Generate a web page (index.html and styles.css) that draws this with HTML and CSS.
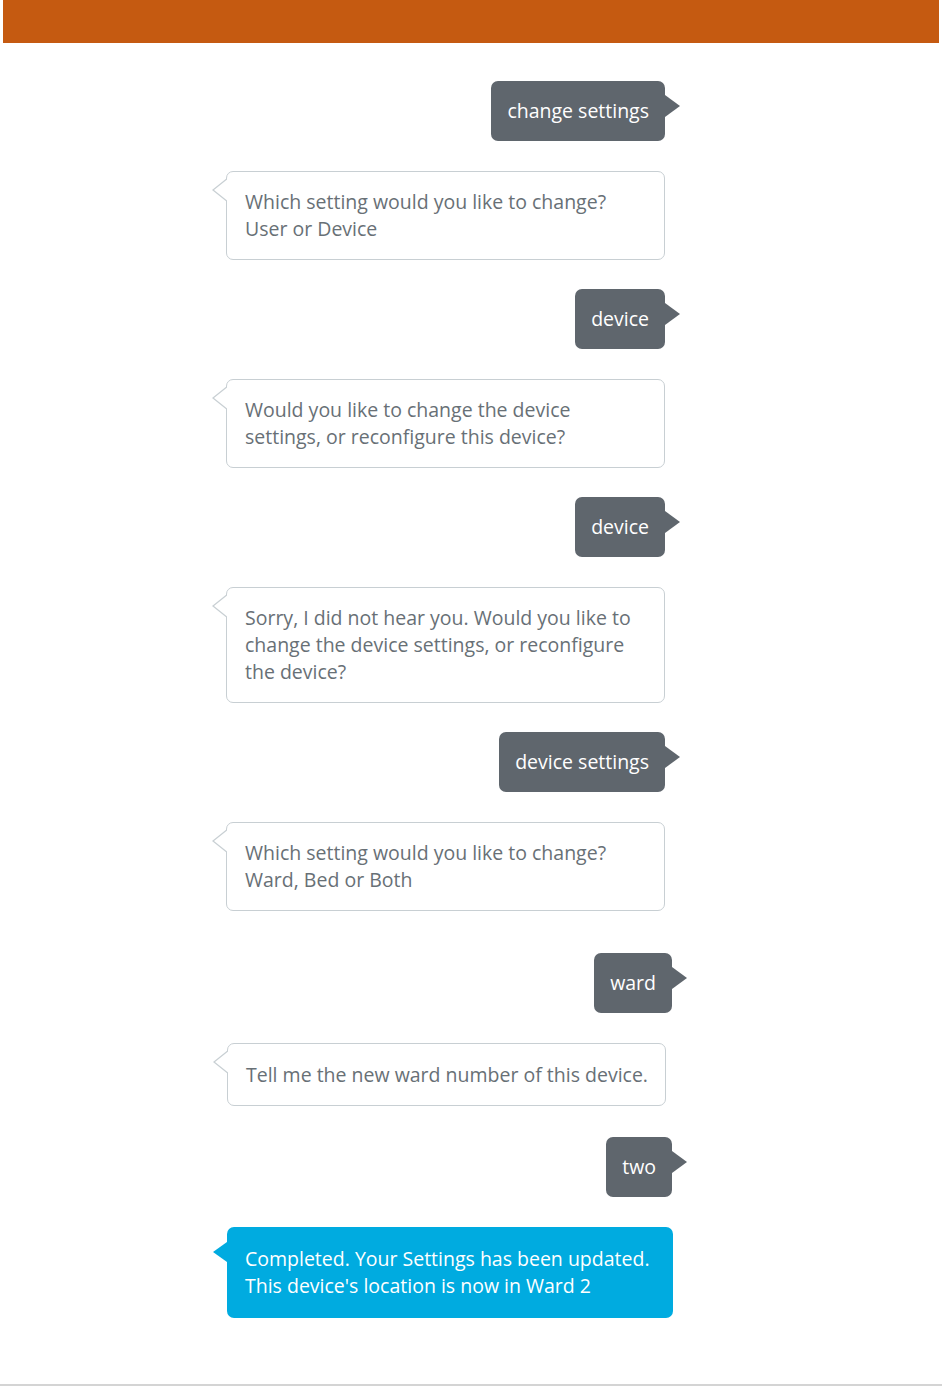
FILE: index.html
```html
<!DOCTYPE html>
<html>
<head>
<meta charset="utf-8">
<link rel="stylesheet" href="styles.css">
</head>
<body>
<div class="page">
  <header class="topbar"></header>
  <main class="chat">
    <div class="msg user">change settings</div>
    <div class="msg bot">Which setting would you like to change?<br>User or Device</div>
    <div class="msg user">device</div>
    <div class="msg bot">Would you like to change the device<br>settings, or reconfigure this device?</div>
    <div class="msg user">device</div>
    <div class="msg bot">Sorry, I did not hear you. Would you like to<br>change the device settings, or reconfigure<br>the device?</div>
    <div class="msg user">device settings</div>
    <div class="msg bot">Which setting would you like to change?<br>Ward, Bed or Both</div>
    <div class="msg user shift gap-lg">ward</div>
    <div class="msg bot single">Tell me the new ward number of this device.</div>
    <div class="msg user shift gap-sm">two</div>
    <div class="msg done">Completed. Your Settings has been updated.<br>This device's location is now in Ward 2</div>
  </main>
</div>
</body>
</html>
```

FILE: styles.css
```css
* { box-sizing: border-box; }
html, body { margin: 0; padding: 0; background: #fff; }
body {
  font-family: "Open Sans", sans-serif;
  font-size: 19.5px;
}
.page {
  width: 942px;
  height: 1386px;
  padding: 0 3px;
  border-bottom: 2px solid #d4d4d4;
}
.topbar {
  height: 43px;
  background: #c55a11;
}
.chat {
  width: 439px;
  margin-left: 223px;
  padding-top: 38px;
  display: flex;
  flex-direction: column;
  gap: 29px;
}
.msg {
  position: relative;
  line-height: 27px;
  border-radius: 7px;
}
.user {
  align-self: flex-end;
  background: #5f666d;
  color: #fff;
  padding: 16px 16px 17px 16px;
}
.user::after {
  content: "";
  position: absolute;
  right: -15px;
  top: 14px;
  border-left: 15px solid #5f666d;
  border-top: 11px solid transparent;
  border-bottom: 11px solid transparent;
}
.user.shift { margin-right: -7px; }
.gap-lg { margin-top: 13px; }
.gap-sm { margin-top: 2px; }
.bot {
  background: #fff;
  color: #687076;
  border: 1px solid #c8cfd3;
  margin-top: 1px;
  padding: 16px 17px 17px 18px;
}
.bot::before {
  content: "";
  position: absolute;
  left: -15px;
  top: 6px;
  border-right: 15px solid #c8cfd3;
  border-top: 12.5px solid transparent;
  border-bottom: 12.5px solid transparent;
}
.bot::after {
  content: "";
  position: absolute;
  left: -13.5px;
  top: 6px;
  border-right: 15px solid #fff;
  border-top: 12.5px solid transparent;
  border-bottom: 12.5px solid transparent;
}
.bot.single {
  margin-left: 1px;
  margin-right: -1px;
  padding: 17px 17px 17px 18px;
}
.done {
  background: #00abe0;
  color: #fff;
  margin-top: 1px;
  margin-left: 1px;
  margin-right: -8px;
  padding: 18px 17px 19px 18px;
}
.done::before {
  content: "";
  position: absolute;
  left: -14px;
  top: 15px;
  border-right: 14px solid #00abe0;
  border-top: 10.5px solid transparent;
  border-bottom: 10.5px solid transparent;
}
```
